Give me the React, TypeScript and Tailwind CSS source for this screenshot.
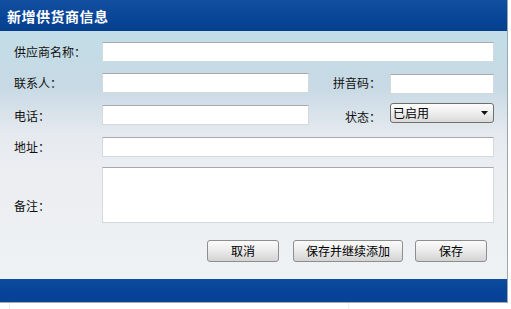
import React from "react";

const inputCls =
  "h-[20px] bg-white border border-[#d3dadf] border-t-[#a9a9ab] box-border";

function Btn({ w, children }: { w: string; children: React.ReactNode }) {
  return (
    <div
      className={`${w} h-[22px] box-border border border-[#8e8e8e] rounded-[3px] bg-[linear-gradient(to_bottom,#fbfbfb_0%,#ececec_45%,#d3d3d3_100%)] flex items-center justify-center text-[12px] leading-[14px] text-black`}
    >
      {children}
    </div>
  );
}

export default function App() {
  return (
    <div className="w-[511px] h-[309px] bg-white overflow-hidden font-['Noto_Sans_CJK_SC',sans-serif] text-[12px] text-[#111]">
      <div className="w-[508px] border-r border-[#9aa5ae] bg-[#f3f6f7]">
        {/* header */}
        <div className="h-[31px] bg-[linear-gradient(to_bottom,#124fa0_0%,#0a4799_50%,#063f8e_100%)] flex items-center pl-[7px]">
          <span className="text-white font-bold text-[14px] leading-[16px] tracking-[0.5px]">
            新增供货商信息
          </span>
        </div>

        {/* body */}
        <div className="h-[248px] bg-[linear-gradient(to_bottom,#c2dee8_0%,#c7d9e4_22%,#e6eaef_42%,#eceef2_60%,#eef2f3_100%)] pt-[11px]">
          {/* row 1 */}
          <div className="flex items-center h-[20px]">
            <div className="w-[102px] pl-[14px] leading-[16px]">供应商名称：</div>
            <div className={`${inputCls} w-[392px]`} />
          </div>

          {/* row 2 */}
          <div className="flex items-center h-[20px] mt-[11px]">
            <div className="w-[102px] pl-[14px] leading-[16px]">联系人：</div>
            <div className={`${inputCls} w-[207px]`} />
            <div className="w-[81px] text-right pr-[9px] leading-[16px]">拼音码：</div>
            <div className={`${inputCls} w-[104px] mt-[2px]`} />
          </div>

          {/* row 3 */}
          <div className="flex items-start h-[22px] mt-[10px]">
            <div className="w-[102px] pl-[14px] leading-[16px] mt-[5px]">电话：</div>
            <div className={`${inputCls} w-[207px] mt-[2px]`} />
            <div className="w-[81px] text-right pr-[9px] leading-[16px] mt-[6px]">状态：</div>
            <div className="w-[104px] h-[20px] box-border border border-[#6f6f6f] rounded-[3px] bg-[linear-gradient(to_bottom,#fdfdfd_0%,#eeeeee_50%,#d9d9d9_100%)] flex items-center pl-[2px] pr-[5px]">
              <span className="flex-1 leading-[14px] text-black">已启用</span>
              <svg width="7" height="4" viewBox="0 0 7 4">
                <path d="M0 0H7L3.5 4Z" fill="#111" />
              </svg>
            </div>
          </div>

          {/* row 4 */}
          <div className="flex items-center h-[20px] mt-[12px]">
            <div className="w-[102px] pl-[14px] leading-[16px]">地址：</div>
            <div className={`${inputCls} w-[392px]`} />
          </div>

          {/* row 5 */}
          <div className="flex items-start mt-[10px]">
            <div className="w-[102px] pl-[14px] leading-[16px] mt-[31px]">备注：</div>
            <div className={`${inputCls} w-[392px] h-[56px]`} />
          </div>

          {/* buttons */}
          <div className="flex mt-[17px] pl-[207px]">
            <Btn w="w-[72px]">取消</Btn>
            <div className="w-[14px]" />
            <Btn w="w-[110px]">保存并继续添加</Btn>
            <div className="w-[12px]" />
            <Btn w="w-[72px]">保存</Btn>
          </div>
        </div>

        {/* bottom bar */}
        <div className="h-[24px] bg-[linear-gradient(to_bottom,#0c4c9c_0%,#07449a_50%,#064395_100%)] border-b border-[#a7a9ad]" />
      </div>
      <div className="flex h-[6px]">
        <div className="w-[10px] border-r border-[#eceef0]" />
        <div className="w-[339px] border-r border-[#eceef0]" />
      </div>
    </div>
  );
}
